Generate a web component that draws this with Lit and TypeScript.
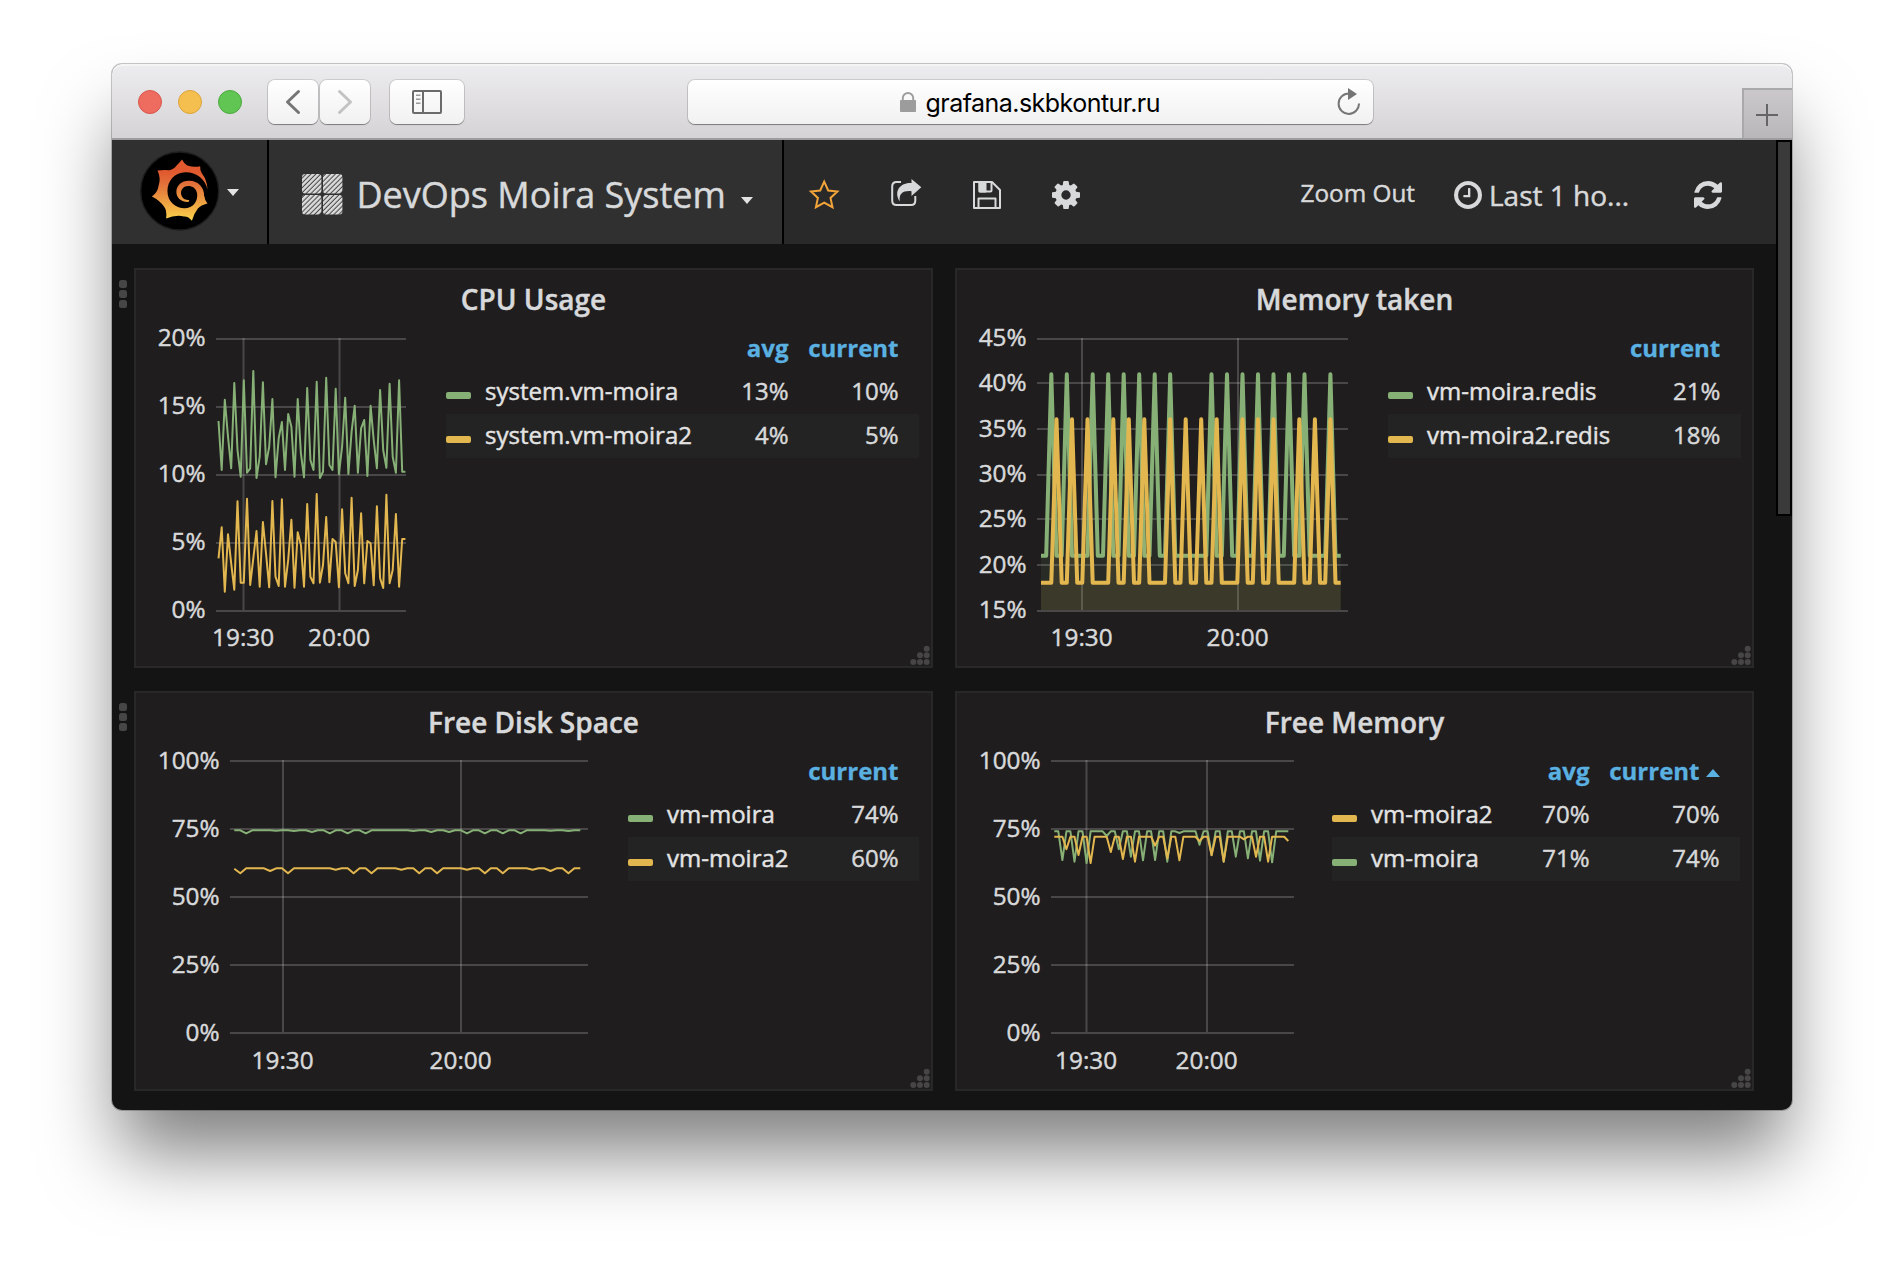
import { LitElement, html, svg, css } from "lit";
import { customElement, property } from "lit/decorators.js";

type Series = { color: string; x0: number; dx: number; ys: number[]; width: number; fill?: boolean };
type Tick = { at: number; label: string };
type Row = { color: string; name: string; values: string[] };
type Panel = {
  title: string;
  left: number;
  top: number;
  width: number;
  plot: [number, number];
  labelX: number;
  labelDy: number;
  yTicks: Tick[];
  xTicks: Tick[];
  series: Series[];
  columns: { label: string; width: number; sorted?: boolean }[];
  rows: Row[];
};

const GREEN = "#87b076";
const YELLOW = "#e3b74f";

/* Flat series with dips or peaks at the given sample indices. */
function flat(count: number, base: number, marks: Record<number, number>): number[] {
  return Array.from({ length: count }, (_, i) => marks[i] ?? base);
}
function peaks(count: number, base: number, top: number, at: number[]): number[] {
  return Array.from({ length: count }, (_, i) => (at.includes(i) ? top : base));
}
const thirds = (ys: number[], offset: number) => ys.map((y) => offset + y / 3);

const PERCENT_100: Tick[] = ["100%", "75%", "50%", "25%", "0%"].map((label, i) => ({ label, at: 761 + i * 68 }));

const PANELS: Panel[] = [
  {
    title: "CPU Usage",
    left: 148, top: 324, width: 298,
    plot: [216, 406],
    labelX: 205.5, labelDy: 7,
    yTicks: ["20%", "15%", "10%", "5%", "0%"].map((label, i) => ({ label, at: 339 + i * 68 })),
    xTicks: [{ at: 243.5, label: "19:30" }, { at: 339.5, label: "20:00" }],
    series: [
      {
        color: GREEN, x0: 218.5, dx: 3.168, width: 2,
        ys: thirds([513, 660, 449, 560, 655, 399, 600, 680, 391, 668, 655, 363, 684, 620, 397, 643, 590, 447, 682, 565,
          516, 660, 492, 530, 680, 447, 610, 682, 414, 630, 660, 395, 684, 665, 383, 645, 660, 416, 672, 590,
          443, 672, 545, 467, 668, 535, 510, 678, 467, 570, 655, 420, 600, 653, 401, 620, 668, 391, 665, 665], 250),
      },
      {
        color: YELLOW, x0: 218.5, dx: 3.168, width: 2,
        ys: thirds([925, 832, 1025, 853, 940, 1019, 754, 998, 998, 746, 1005, 925, 843, 1010, 816, 910, 1012, 753, 980, 1008,
          748, 1010, 930, 809, 1013, 847, 885, 1010, 762, 980, 1000, 732, 998, 945, 801, 997, 867, 876, 1012, 778,
          970, 1000, 743, 1008, 960, 790, 1000, 873, 880, 1006, 769, 985, 1014, 734, 1000, 960, 792, 1010, 867, 867], 250),
      },
    ],
    columns: [{ label: "avg", width: 82 }, { label: "current", width: 110 }],
    rows: [
      { color: GREEN, name: "system.vm-moira", values: ["13%", "10%"] },
      { color: YELLOW, name: "system.vm-moira2", values: ["4%", "5%"] },
    ],
  },
  {
    title: "Memory taken",
    left: 969, top: 324, width: 419,
    plot: [1037, 1348],
    labelX: 1026.5, labelDy: 7,
    yTicks: [[339, "45%"], [383, "40%"], [429, "35%"], [475, "30%"], [519, "25%"], [565, "20%"], [611, "15%"]]
      .map(([at, label]) => ({ at: at as number, label: label as string })),
    xTicks: [{ at: 1082, label: "19:30" }, { at: 1238, label: "20:00" }],
    series: [
      {
        color: GREEN, x0: 1041, dx: 5.167, width: 4, fill: true,
        ys: thirds(peaks(59, 887, 343, [2, 5, 10, 13, 16, 19, 22, 25, 33, 36, 39, 42, 45, 48, 51, 56]), 260),
      },
      {
        color: YELLOW, x0: 1041, dx: 5.167, width: 4, fill: true,
        ys: thirds(peaks(59, 968, 478, [3, 6, 9, 14, 17, 20, 25, 28, 31, 34, 39, 42, 45, 50, 53, 56]), 260),
      },
    ],
    columns: [{ label: "current", width: 110 }],
    rows: [
      { color: GREEN, name: "vm-moira.redis", values: ["21%"] },
      { color: YELLOW, name: "vm-moira2.redis", values: ["18%"] },
    ],
  },
  {
    title: "Free Disk Space",
    left: 148, top: 747, width: 480,
    plot: [230, 588],
    labelX: 219.5, labelDy: 8,
    yTicks: PERCENT_100,
    xTicks: [{ at: 283, label: "19:30" }, { at: 461, label: "20:00" }],
    series: [
      {
        color: GREEN, x0: 234.3, dx: 5.966, width: 2,
        ys: thirds(flat(59, 451, { 2: 460, 7: 452, 10: 453, 13: 456, 16: 460, 19: 460, 22: 460, 30: 453, 33: 456, 36: 456,
          39: 460, 42: 460, 45: 460, 48: 460, 53: 452, 56: 453 }), 680),
      },
      {
        color: YELLOW, x0: 234.3, dx: 5.966, width: 2,
        ys: thirds(flat(59, 565, { 0: 566, 1: 580, 6: 573, 9: 580, 17: 569, 20: 580, 23: 580, 28: 569, 31: 580, 34: 580,
          39: 569, 42: 580, 45: 580, 50: 569, 53: 573, 56: 580 }), 680),
      },
    ],
    columns: [{ label: "current", width: 110 }],
    rows: [
      { color: GREEN, name: "vm-moira", values: ["74%"] },
      { color: YELLOW, name: "vm-moira2", values: ["60%"] },
    ],
  },
  {
    title: "Free Memory",
    left: 969, top: 747, width: 363,
    plot: [1051, 1294],
    labelX: 1040.5, labelDy: 8,
    yTicks: PERCENT_100,
    xTicks: [{ at: 1086.5, label: "19:30" }, { at: 1207, label: "20:00" }],
    series: [
      {
        color: GREEN, x0: 1054.3, dx: 4.034, width: 2,
        ys: thirds(flat(59, 454, { 2: 540, 5: 545, 8: 549, 13: 468, 16: 508, 19: 530, 22: 541, 25: 540, 28: 545, 31: 459,
          36: 494, 39: 525, 42: 545, 45: 530, 48: 535, 51: 542, 54: 547 }), 680),
      },
      {
        color: YELLOW, x0: 1054.3, dx: 4.034, width: 2,
        ys: thirds(flat(59, 470, { 3: 508, 6: 525, 9: 549, 14: 516, 17: 537, 20: 545, 25: 497, 28: 535, 31: 541, 36: 483,
          39: 526, 42: 545, 47: 478, 50: 530, 53: 545, 58: 483 }), 680),
      },
    ],
    columns: [{ label: "avg", width: 82 }, { label: "current", width: 130, sorted: true }],
    rows: [
      { color: YELLOW, name: "vm-moira2", values: ["70%", "70%"] },
      { color: GREEN, name: "vm-moira", values: ["71%", "74%"] },
    ],
  },
];

@customElement("graph-panel")
class GraphPanel extends LitElement {
  @property({ attribute: false }) panel!: Panel;

  static styles = css`
    :host {
      display: flex;
      flex-direction: column;
      position: relative;
      box-sizing: border-box;
      width: 799px;
      height: 400px;
      padding: 12px;
      border: 2px solid #282828;
      background: #1f1d1e;
      color: #d8d9da;
      font-family: "Open Sans", "Noto Sans", sans-serif;
      -webkit-text-stroke: 0.45px;
    }
    .title { height: 42px; line-height: 34px; font-size: 28px; font-weight: 600; text-align: center; }
    .body { display: flex; }
    .chart { display: block; flex: none; overflow: visible; }
    .tick { font-size: 24.3px; fill: #d8d9da; stroke: #d8d9da; stroke-width: 0.45px; }
    .grid { stroke: #fff; stroke-opacity: 0.19; stroke-width: 2; }
    .legend { flex: 1; font-size: 24px; padding-top: 2px; white-space: nowrap; }
    .line { display: flex; align-items: center; box-sizing: border-box; height: 44px; line-height: 40px; padding: 0 20.5px 2px 0; }
    .line:nth-child(odd):not(.head) { background: #242323; }
    .swatch { width: 25px; height: 7px; border-radius: 2px; margin: 9px 14px 0 0; }
    .name { flex: 1; color: #e3e3e3; }
    .value { text-align: right; }
    .head { color: #5ab1e1; font-weight: 700; line-height: 48px; padding-bottom: 0; -webkit-text-stroke: 0.3px; }
    .head .value { display: flex; justify-content: flex-end; align-items: center; }
    .arrow { width: 14px; height: 8px; margin: 3px 0 0 6px; fill: #5ab1e1; }
    .resize { position: absolute; right: 1px; bottom: 1px; width: 20px; height: 20px; fill: #464646; }
  `;

  private drawSeries(s: Series, floor: number) {
    const pts = s.ys.map((y, i) => `${(s.x0 + i * s.dx).toFixed(1)},${y.toFixed(1)}`);
    const end = s.x0 + (s.ys.length - 1) * s.dx;
    return svg`
      ${s.fill ? svg`<polygon points=${`${s.x0},${floor} ${pts.join(" ")} ${end},${floor}`} fill=${s.color} fill-opacity="0.1"/>` : null}
      <polyline points=${pts.join(" ")} fill="none" stroke=${s.color} stroke-width=${s.width} stroke-linejoin="round"/>`;
  }

  render() {
    const p = this.panel;
    const top = p.yTicks[0].at;
    const floor = p.yTicks[p.yTicks.length - 1].at;
    const step = (floor - top) / (p.yTicks.length - 1);
    return html`
      <div class="title">${p.title}</div>
      <div class="body">
        <svg class="chart" width=${p.width} height="328" viewBox=${`${p.left} ${p.top} ${p.width} 328`}>
          ${p.yTicks.map((t, i) => svg`<line class="grid" x1=${p.plot[0]} x2=${p.plot[1]} y1=${t.at} y2=${t.at}/>
            <text class="tick" x=${p.labelX} y=${Math.round(top + i * step + p.labelDy)} text-anchor="end">${t.label}</text>`)}
          ${p.xTicks.map((t) => svg`<line class="grid" x1=${t.at} x2=${t.at} y1=${top - 1} y2=${floor - 1}/>
            <text class="tick" x=${t.at - 0.4} y=${floor + 28 + p.labelDy} text-anchor="middle">${t.label}</text>`)}
          ${p.series.map((s) => this.drawSeries(s, floor - 1))}
        </svg>
        <div class="legend">
          <div class="line head">
            <span class="name"></span>
            ${p.columns.map((c) => html`<span class="value" style="width:${c.width}px">${c.label}${c.sorted
              ? html`<svg class="arrow" viewBox="0 0 14 8"><path d="M0 8 7 0l7 8z"/></svg>` : null}</span>`)}
          </div>
          ${p.rows.map((r) => html`
            <div class="line">
              <span class="swatch" style="background:${r.color}"></span>
              <span class="name">${r.name}</span>
              ${r.values.map((v, i) => html`<span class="value" style="width:${p.columns[i].width}px">${v}</span>`)}
            </div>`)}
        </div>
      </div>
      <svg class="resize" viewBox="0 0 20 20">
        <circle cx="16.7" cy="3.7" r="3"/><circle cx="10" cy="10.3" r="3"/><circle cx="16.7" cy="10.3" r="3"/>
        <circle cx="3.3" cy="17" r="3"/><circle cx="10" cy="17" r="3"/><circle cx="16.7" cy="17" r="3"/>
      </svg>`;
  }
}

@customElement("app-root")
class AppRoot extends LitElement {
  static styles = css`
    :host {
      display: block;
      box-sizing: border-box;
      width: 1904px;
      height: 1270px;
      padding: 64px 112px;
      overflow: hidden;
      background: #fff;
      font-family: "Open Sans", "Noto Sans", sans-serif;
    }
    .window {
      width: 1680px;
      height: 1046px;
      border-radius: 10px;
      background: #141414;
      box-shadow: 0 0 0 1px rgba(0, 0, 0, 0.22), 0 50px 75px -7px rgba(0, 0, 0, 0.5);
    }
    .chrome {
      display: flex;
      box-sizing: border-box;
      height: 76px;
      padding: 16px 0 0 26px;
      border-bottom: 2px solid #9d9c9e;
      border-radius: 10px 10px 0 0;
      background: linear-gradient(#edecee, #d5d3d6);
      box-shadow: inset 0 2px 0 #f6f5f6;
    }
    .light { box-sizing: border-box; width: 24px; height: 24px; margin: 10px 16px 0 0; border-radius: 50%; border: 1px solid; }
    .close { background: #ed6b5f; border-color: #d8564b; }
    .minimize { background: #f5bf4f; border-color: #dba43c; }
    .zoom { background: #61c554; border-color: #4ca93d; }
    .button {
      display: flex;
      align-items: center;
      justify-content: center;
      width: 50px;
      height: 44px;
      border-radius: 7px;
      background: linear-gradient(#fff, #f1f1f1);
      box-shadow: 0 0 0 1px rgba(0, 0, 0, 0.12), 0 1px 1px rgba(0, 0, 0, 0.35);
    }
    .back { margin: 0 2px 0 10px; }
    .sidebar { width: 74px; margin-left: 20px; }
    .address { width: 685px; margin-left: 224px; justify-content: flex-start; }
    .lock { margin: 0 9.5px 0 212px; }
    .url { flex: 1; font: 25px/44px Inter, Roboto, sans-serif; letter-spacing: -0.53px; color: #000; padding-top: 2px; }
    .reload { margin-right: 13px; }
    .newtab {
      box-sizing: border-box;
      display: flex;
      align-items: center;
      justify-content: center;
      width: 50px;
      height: 50px;
      margin: 8px 0 0 auto;
      padding: 2px 2px 0 0;
      border: solid #a9a8aa;
      border-width: 2px 0 0 2px;
      background: linear-gradient(#cac8cb, #b9b7ba);
    }
    .content { display: flex; height: 970px; }
    .page { width: 1664px; }
    .scrollbar { width: 16px; }
    .thumb { box-sizing: border-box; height: 376px; border: 2px solid #000; background: #3a3a3a; }
    .nav { display: flex; height: 104px; background: #292929; color: #d8d9da; -webkit-text-stroke: 0.45px; }
    .nav svg { flex: none; }
    .brand, .dash { box-sizing: border-box; display: flex; background: #303030; border-right: 2px solid #000; }
    .brand { width: 157px; padding: 11px 0 0 28px; }
    .caret { width: 0; height: 0; border: 6px solid transparent; border-top: 7px solid #e3e3e3; border-bottom: 0; }
    .brand .caret { margin: 38px 0 0 7px; }
    .dash { width: 515px; padding-left: 33px; }
    .grid-icon { margin-top: 34px; }
    .name { width: 368px; margin: 30px 0 0 14px; font-size: 36px; line-height: 50px; white-space: nowrap; }
    .dash .caret { margin: 57px 0 0 16px; }
    .actions { display: flex; padding: 38.5px 0 0 24px; }
    .actions .share { margin-left: 50px; }
    .actions .save { margin-left: 50.5px; }
    .actions .settings { margin-left: 51.5px; }
    .zoom-out { margin: 36px 0 0 auto; font-size: 24.3px; line-height: 34px; white-space: nowrap; }
    .clock { margin: 40.5px 7px 0 39px; }
    .range { width: 141px; margin-top: 35px; font-size: 28px; line-height: 40px; white-space: nowrap; }
    .refresh { margin: 40.5px 54px 0 64px; fill: #d8d9da; }
    .rows { display: flex; flex-direction: column; gap: 23px; padding-top: 24px; }
    .row { display: flex; padding-left: 7px; }
    .handle { display: flex; flex-direction: column; gap: 2.4px; width: 15px; padding-top: 11.5px; }
    .handle i { width: 8px; height: 8px; border-radius: 2.5px; background: #464646; }
    .row graph-panel + graph-panel { margin-left: 22px; }
  `;

  private fa(d: string, cls = "") {
    return html`<svg class=${cls} width="28" height="28" viewBox="128 128 1536 1536" fill="#d8d9da"><path d=${d}/></svg>`;
  }

  render() {
    const tiles = [[0, 0], [21, 0], [0, 21], [21, 21]];
    return html`
      <div class="window">
        <div class="chrome">
          <span class="light close"></span><span class="light minimize"></span><span class="light zoom"></span>
          <span class="button back">
            <svg width="16" height="26" viewBox="0 0 16 26" fill="none" stroke="#757575" stroke-width="3" stroke-linecap="round" stroke-linejoin="round"><path d="M13.5 2.5 2.5 13l11 10.5"/></svg>
          </span>
          <span class="button">
            <svg width="16" height="26" viewBox="0 0 16 26" fill="none" stroke="#c3c3c3" stroke-width="3" stroke-linecap="round" stroke-linejoin="round"><path d="M2.5 2.5 13.5 13l-11 10.5"/></svg>
          </span>
          <span class="button sidebar">
            <svg width="30" height="24" viewBox="0 0 30 24" fill="none" stroke="#6b6b6b" stroke-width="2"><rect x="1" y="1" width="28" height="22" rx="1"/><path d="M11 1v22"/><path d="M4 5.2h4.5M4 9.2h4.5M4 13.2h4.5" stroke="#9a9a9a" stroke-width="1.6"/></svg>
          </span>
          <span class="button address">
            <svg class="lock" width="16" height="20" viewBox="0 0 16 20"><rect y="8" width="16" height="12" rx="0.8" fill="#9c9c9c"/><path d="M2.8 9V6a5.2 5 0 0 1 10.4 0v3" fill="none" stroke="#9c9c9c" stroke-width="1.9"/></svg>
            <span class="url">grafana.skbkontur.ru</span>
            <svg class="reload" width="23" height="28" viewBox="0 0 23 28"><path d="M12 5.5a10.2 10.2 0 1 0 10 10" fill="none" stroke="#757575" stroke-width="2"/><path d="M11 0 20 6l-9 6z" fill="#757575"/></svg>
          </span>
          <span class="newtab">
            <svg width="22" height="22" viewBox="0 0 22 22" stroke="#656466" stroke-width="2"><path d="M11 0v22M0 11h22"/></svg>
          </span>
        </div>
        <div class="content">
          <div class="page">
            <div class="nav">
              <div class="brand">
                <svg width="80" height="80" viewBox="150 302 242 242">
                  <defs><linearGradient id="g" x1="0" y1="0" x2="0" y2="1"><stop offset="0.2" stop-color="#e0592f"/><stop offset="0.4" stop-color="#e2703a"/><stop offset="1" stop-color="#fbd24a"/></linearGradient></defs>
                  <circle cx="270" cy="423" r="118" fill="#000" stroke="#1d1d1d" stroke-width="4"/>
                  <path fill="url(#g)" d="M277 328Q284 342 293 346Q314 352 332 348Q331 360 337 369Q352 388 354 415L344 436Q346 452 354 461Q334 466 325 476Q314 490 307 513Q296 499 283 500Q258 494 229 506Q232 482 223 471Q210 452 186 440Q204 426 206 408Q214 386 203 361Q222 358 240 360Q256 354 262 344Q270 338 277 328Z"/>
                  <path fill="#000" d="M354 417C347 387 322 366 288 366C255 366 233 392 233 423C233 455 257 475 285 475C310 475 325 455 323 432C321 415 308 408 296 408C282 408 274 418 274 430C275 444 287 452 299 450L297 456C278 458 260 445 260 426C260 405 277 392 297 392C325 391 345 412 344 438L362 432Z"/>
                </svg>
                <span class="caret"></span>
              </div>
              <div class="dash">
                <svg class="grid-icon" width="40.5" height="40.5" viewBox="0 0 40.5 40.5">
                  <defs><pattern id="h" width="3.45" height="3.45" patternUnits="userSpaceOnUse" patternTransform="rotate(45)"><rect width="3.45" height="3.45" fill="#484848"/><rect width="2.4" height="3.45" fill="#dcdcdc"/></pattern></defs>
                  ${tiles.map(([x, y]) => svg`<rect x=${x} y=${y} width="19.4" height="19.4" rx="3" fill="url(#h)"/>`)}
                </svg>
                <span class="name">DevOps Moira System</span>
                <span class="caret"></span>
              </div>
              <div class="actions">
                <svg width="32" height="32" viewBox="0 0 32 32" fill="none" stroke="#f2a43a" stroke-width="2" stroke-linejoin="miter"><path d="M16.2 2.600l4 8.900 9.200 1-6.900 6.400 2 9.300-8.300-4.600-8.300 4.600 2-9.300L3 12.500l9.200-1z"/></svg>
                <svg class="share" width="32" height="32" viewBox="0 0 32 32"><path d="M11 3H6.500Q2.200 3 2.200 7.500v14q0 4.500 4.300 4.500h14.500q4.300 0 4.300-4.500V17" fill="none" stroke="#d8d9da" stroke-width="2"/><path d="M21.500 0 31.300 8.300 21.500 17v-4.800C13 11.500 8.800 14.500 9.800 22.300 3.500 13 9.500 3.300 21.500 4z" fill="#d8d9da"/></svg>
                <svg class="save" width="28" height="32" viewBox="0 0 28 32" fill="none" stroke="#d8d9da" stroke-width="2" stroke-linejoin="round"><path d="M1 3h18l8 8v18H1zM5.500 29V19.500h17V29"/><path d="M6.500 3v8.500Q6.500 12.500 7.500 12.500h10q1 0 1-1V3"/><path d="M6.500 3h6v9.500h-6z" fill="#d8d9da"/></svg>
                <svg class="settings" width="28" height="32" viewBox="128 18 1536 1755" fill="#d8d9da"><path d="M1152 896q0-106-75-181t-181-75-181 75-75 181 75 181 181 75 181-75 75-181zm512-109v222q0 12-8 23t-20 13l-185 28q-19 54-39 91 35 50 107 138 10 12 10 25t-9 23q-27 37-99 108t-94 71q-12 0-26-9l-138-108q-44 23-91 38-16 136-29 186-7 28-36 28h-222q-14 0-24.500-8.500t-11.500-21.500l-28-184q-49-16-90-37l-141 107q-10 9-25 9-14 0-25-11-126-114-165-168-7-10-7-23 0-12 8-23 15-21 51-66.500t54-70.500q-27-50-41-99l-183-27q-13-2-21-12.500t-8-23.500v-222q0-12 8-23t19-13l186-28q14-46 39-92-40-57-107-138-10-12-10-24 0-10 9-23 26-36 98.500-107.500t94.500-71.500q13 0 26 10l138 107q44-23 91-38 16-136 29-186 7-28 36-28h222q14 0 24.500 8.500t11.500 21.500l28 184q49 16 90 37l142-107q9-9 24-9 13 0 25 10 129 119 165 170 7 8 7 22 0 12-8 23-15 21-51 66.500t-54 70.500q26 50 41 98l183 28q13 2 21 12.500t8 23.500z"/></svg>
              </div>
              <span class="zoom-out">Zoom Out</span>
              ${this.fa("M1024 544v448q0 14-9 23t-23 9h-320q-14 0-23-9t-9-23v-64q0-14 9-23t23-9h224v-352q0-14 9-23t23-9h64q14 0 23 9t9 23zm416 352q0-148-73-273t-198-198-273-73-273 73-198 198-73 273 73 273 198 198 273 73 273-73 198-198 73-273zm224 0q0 209-103 385.5t-279.5 279.5-385.5 103-385.5-103-279.5-279.5-103-385.5 103-385.5 279.5-279.5 385.5-103 385.5 103 279.5 279.5 103 385.5z", "clock")}
              <span class="range">Last 1 ho...</span>
              ${this.fa("M1639 1056q0 5-1 7-64 268-268 434.5t-478 166.5q-146 0-282.5-55t-243.5-157l-129 129q-19 19-45 19t-45-19-19-45v-448q0-26 19-45t45-19h448q26 0 45 19t19 45-19 45l-137 137q71 66 161 102t187 36q134 0 250-65t186-179q11-17 53-117 8-23 30-23h192q13 0 22.5 9.5t9.5 22.5zm25-800v448q0 26-19 45t-45 19h-448q-26 0-45-19t-19-45 19-45l138-138q-148-137-349-137-134 0-250 65t-186 179q-11 17-53 117-8 23-30 23h-199q-13 0-22.5-9.5t-9.5-22.5v-7q65-268 270-434.5t480-166.5q146 0 284 55.5t245 156.5l130-129q19-19 45-19t45 19 19 45z", "refresh")}
            </div>
            <div class="rows">
              ${[0, 2].map((n) => html`
                <div class="row">
                  <div class="handle"><i></i><i></i><i></i></div>
                  <graph-panel .panel=${PANELS[n]}></graph-panel>
                  <graph-panel .panel=${PANELS[n + 1]}></graph-panel>
                </div>`)}
            </div>
          </div>
          <div class="scrollbar"><div class="thumb"></div></div>
        </div>
      </div>`;
  }
}
